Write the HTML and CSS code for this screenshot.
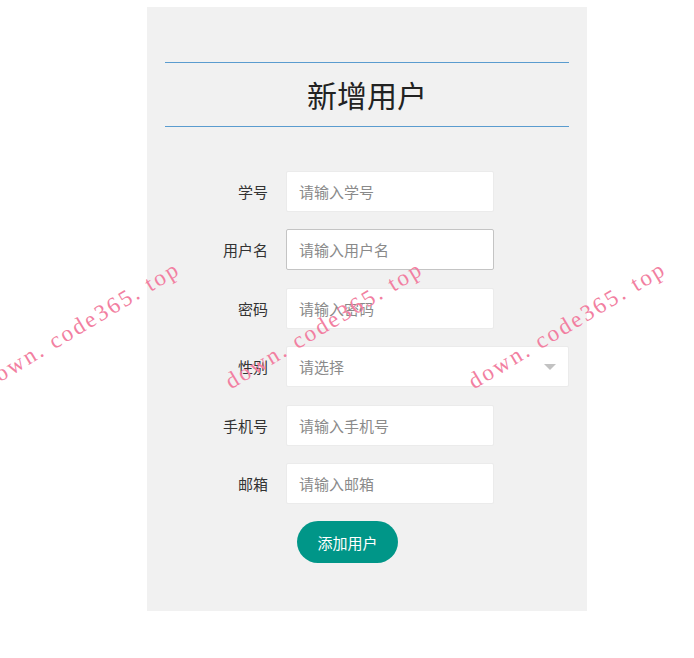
FILE: index.html
```html
<!DOCTYPE html>
<html lang="zh-CN">

<head>
  <meta charset="utf-8" />
  <title>新增用户</title>
  <link rel="stylesheet" href="styles.css">
</head>

<body class="page">
  <div class="panel">
    <h1 class="panel_title">新增用户</h1>

    <form class="user_form">
      <div class="form_row">
        <label class="form_label">学号</label>
        <input class="form_input" type="text" placeholder="请输入学号">
      </div>
      <div class="form_row">
        <label class="form_label">用户名</label>
        <input class="form_input form_input_active" type="text" placeholder="请输入用户名">
      </div>
      <div class="form_row">
        <label class="form_label">密码</label>
        <input class="form_input" type="password" placeholder="请输入密码">
      </div>
      <div class="form_row">
        <label class="form_label">性别</label>
        <div class="form_select">
          <span class="form_select_text">请选择</span>
          <span class="form_select_arrow"></span>
        </div>
      </div>
      <div class="form_row">
        <label class="form_label">手机号</label>
        <input class="form_input" type="text" placeholder="请输入手机号">
      </div>
      <div class="form_row">
        <label class="form_label">邮箱</label>
        <input class="form_input" type="text" placeholder="请输入邮箱">
      </div>

      <div class="form_actions">
        <button class="add_btn" type="button">添加用户</button>
      </div>
    </form>
  </div>

  <!-- 水印 -->
  <span class="watermark watermark_1">down. code365. top</span>
  <span class="watermark watermark_2">down. code365. top</span>
  <span class="watermark watermark_3">down. code365. top</span>
</body>

</html>
```

FILE: styles.css
```css
body {
  margin: 0;
  background-color: #ffffff;
  font-family: "Noto Sans CJK SC", "Noto Sans", sans-serif;
  color: #333;
}

.page {
  position: relative;
  height: 658px;
  overflow: hidden;
}

.panel {
  width: 440px;
  height: 604px;
  margin: 7px 0 0 147px;
  padding: 55px 18px 0 18px;
  box-sizing: border-box;
  background-color: #f1f1f1;
}

.panel_title {
  margin: 0;
  height: 63px;
  line-height: 62px;
  border-top: 1px solid #5a9ccf;
  border-bottom: 1px solid #5a9ccf;
  text-align: center;
  font-size: 30px;
  font-weight: normal;
  color: #222;
}

.user_form {
  display: flex;
  flex-direction: column;
  gap: 17.4px;
  margin-top: 44px;
}

.form_row {
  display: flex;
  align-items: center;
  height: 41px;
}

.form_label {
  width: 103px;
  flex-shrink: 0;
  padding-right: 18px;
  text-align: right;
  font-size: 15px;
  color: #333;
}

.form_input {
  width: 208px;
  height: 41px;
  box-sizing: border-box;
  padding: 0 12px;
  border: 1px solid #ebebeb;
  border-radius: 2px;
  background-color: #fff;
  font-family: inherit;
  font-size: 15px;
  outline: none;
}

.form_input::placeholder {
  color: #8a8a8a;
}

.form_input_active {
  border-color: #c4c4c4;
}

.form_select {
  display: flex;
  align-items: center;
  justify-content: space-between;
  width: 283px;
  height: 41px;
  box-sizing: border-box;
  padding: 0 12px;
  border: 1px solid #ebebeb;
  border-radius: 2px;
  background-color: #fff;
}

.form_select_text {
  font-size: 15px;
  color: #8a8a8a;
}

.form_select_arrow {
  width: 0;
  height: 0;
  border-left: 6px solid transparent;
  border-right: 6px solid transparent;
  border-top: 6px solid #c2c2c2;
}

.form_actions {
  padding-left: 132px;
}

.add_btn {
  width: 101px;
  height: 42px;
  border: none;
  border-radius: 21px;
  background-color: #009688;
  color: #fff;
  font-family: inherit;
  font-size: 15px;
  cursor: pointer;
}

.watermark {
  position: absolute;
  font-family: "Liberation Serif", serif;
  font-size: 23px;
  line-height: 23px;
  letter-spacing: 2.5px;
  color: #f27fa1;
  white-space: nowrap;
  transform-origin: 0 100%;
  transform: rotate(-31deg);
  pointer-events: none;
}

.watermark_1 {
  left: -10px;
  top: 370px;
}

.watermark_2 {
  left: 233px;
  top: 370px;
}

.watermark_3 {
  left: 476px;
  top: 370px;
}
```
